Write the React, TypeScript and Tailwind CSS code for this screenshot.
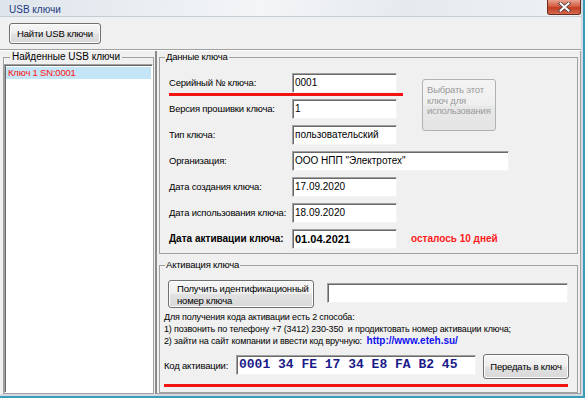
const btn =
  'rounded-[3px] border border-[#707070] bg-[linear-gradient(#f6f6f6,#eeeeee_48%,#e1e1e1_52%,#d8d8d8)] shadow-[inset_0_0_0_1px_#fcfcfc] text-black font-normal';
const field =
  'h-[20px] bg-white border border-t-[#a0a0a0] border-l-[#a0a0a0] border-b-[#f4f4f4] border-r-[#f4f4f4] shadow-[inset_1px_1px_0_#696969] pl-[2px] flex items-center text-[10px] tracking-normal';

type RowProps = {
  label: string;
  value: string;
  width?: string;
  bold?: boolean;
  children?: React.ReactNode;
};

function Row({ label, value, width = 'w-[105px]', bold, children }: RowProps) {
  return (
    <div className="flex h-[20px] items-center">
      <span className={`w-[123px] whitespace-nowrap ${bold ? 'text-[10px] font-bold tracking-normal' : ''}`}>{label}</span>
      <div className={`${field} ${width} ${bold ? 'text-[11px] font-bold' : ''}`}>{value}</div>
      {children}
    </div>
  );
}

function App() {
  return (
    <div className="h-[398px] w-[585px] overflow-hidden bg-[#3a9cb6] font-['Liberation_Sans',Arial,sans-serif] text-[9.5px] leading-[12px] tracking-[-0.2px] text-black">
      <div className="flex h-[396px] w-[583px] flex-col border-r-[2px] border-b-[2px] border-[#d3dae1] bg-[#f0f0f0]">
        {/* title bar */}
        <div className="flex h-[17px] shrink-0 items-start justify-between border-b border-[#c4ccd4] bg-[linear-gradient(100deg,#dfe5ec,#f3f5f7_45%,#e6eaee_70%,#eef1f4)]">
          <span className="pl-[9px] pt-[4px] text-[10px] tracking-normal text-[#1e3a82]">USB ключи</span>
          <div className="flex h-[15px] w-[34px] items-center justify-center rounded-b-[3px] border border-t-0 border-[#6b2c1f] bg-[linear-gradient(#e8a290,#d45e44_45%,#c43d22_55%,#d26a4f)]">
            <svg width="13" height="10" viewBox="0 0 13 10">
              <path d="M2.5 1.5 L10.5 8.5 M10.5 1.5 L2.5 8.5" stroke="#4a3a3a" strokeWidth="3.6" strokeLinecap="square" />
              <path d="M2.5 1.5 L10.5 8.5 M10.5 1.5 L2.5 8.5" stroke="#ffffff" strokeWidth="2" strokeLinecap="square" />
            </svg>
          </div>
        </div>

        {/* toolbar */}
        <div className="flex h-[32px] shrink-0 items-start pl-[9px] pt-[6px]">
          <button className={`${btn} h-[21px] w-[92px] text-[9.5px]`}>Найти USB ключи</button>
        </div>
        <div className="h-[2px] shrink-0 border-t border-b border-t-[#a0a0a0] border-b-white" />

        {/* main */}
        <div className="flex min-h-0 flex-1 pl-[3px]">
          {/* left: found keys */}
          <fieldset className="flex w-[151px] flex-col border border-[#a0a0a0] shadow-[inset_1px_0_0_#fff]">
            <legend className="ml-[6px] px-[2px] text-[10px] tracking-normal">Найденные USB ключи</legend>
            <div className="mt-[1px] flex-1 border border-t-[#a0a0a0] border-l-[#a0a0a0] border-b-white border-r-white bg-white pt-[2px] shadow-[inset_1px_1px_0_#696969]">
              <div className="ml-[1px] mr-[1px] h-[12px] bg-[#c4e5f6] pl-[2px] text-[#ff1010]">Ключ 1 SN:0001</div>
            </div>
          </fieldset>

          {/* right panel */}
          <div className="ml-[1px] flex flex-1 flex-col border-l-2 border-r border-b border-l-[#8a8a8a] border-r-[#a0a0a0] border-b-[#a0a0a0] pl-[2px] pr-[2px]">
            <fieldset className="border border-[#a0a0a0]">
              <legend className="ml-[5px] px-[1px]">Данные ключа</legend>
              <div className="flex flex-col pb-[4px] pl-[9px]">
                <div className="flex pt-[10px]">
                  <div className="flex flex-col">
                    <Row label="Серийный № ключа:" value="0001" />
                    <div className="h-[3px] w-[234px] bg-[#f21313]" />
                    <div className="mt-[3px] flex flex-col gap-[6px]">
                      <Row label="Версия прошивки ключа:" value="1" />
                      <Row label="Тип ключа:" value="пользовательский" />
                    </div>
                  </div>
                  <button className="ml-[19px] mt-[6px] flex h-[52px] w-[74px] flex-col items-start rounded-[3px] border border-[#adb2b5] bg-[linear-gradient(#f4f4f4,#efefef_50%,#e8e8e8_52%,#e4e4e4)] pl-[4px] pt-[5px] text-left leading-[10.5px] text-[#9a9a9a]">
                    <span>Выбрать этот</span>
                    <span>ключ для</span>
                    <span>использования</span>
                  </button>
                </div>
                <div className="mt-[6px] flex flex-col gap-[6px]">
                  <Row label="Организация:" value={'ООО НПП "Электротех"'} width="w-[217px]" />
                  <Row label="Дата создания ключа:" value="17.09.2020" />
                  <Row label="Дата использования ключа:" value="18.09.2020" />
                  <Row label="Дата активации ключа:" value="01.04.2021" bold>
                    <span className="ml-[14px] text-[10px] font-bold tracking-normal text-[#ff1a1a]">осталось 10 дней</span>
                  </Row>
                </div>
              </div>
            </fieldset>

            <fieldset className="mt-[5px] flex-1 border border-[#a0a0a0]">
              <legend className="ml-[5px] px-[1px]">Активация ключа</legend>
              <div className="flex flex-col pb-[2px] pl-[4px]">
                <div className="flex items-start pt-[9px] pl-[4px]">
                  <button className={`${btn} flex h-[28px] w-[146px] flex-col items-start pl-[8px] pt-[2px] text-left whitespace-nowrap`}>
                    <span>Получить идентификационный</span>
                    <span>номер ключа</span>
                  </button>
                  <div className={`${field} ml-[13px] mt-[3px] w-[241px]`} />
                </div>
                <div className="mt-[3px] flex flex-col text-[9px] tracking-[-0.15px] whitespace-nowrap">
                  <span>Для получения кода активации есть 2 способа:</span>
                  <span>1) позвонить по телефону +7 (3412) 230-350&nbsp; и продиктовать номер активации ключа;</span>
                  <span>
                    2) зайти на сайт компании и ввести код вручную:&nbsp;{' '}
                    <span className="text-[10px] font-bold tracking-normal text-[#1010f0]">http://www.eteh.su/</span>
                  </span>
                </div>
                <div className="mt-[7px] flex items-start">
                  <span className="mt-[6px] w-[72px] whitespace-nowrap">Код активации:</span>
                  <div className={`${field} mt-[1px] h-[20px] w-[240px] font-['Liberation_Mono',monospace] text-[13px] font-bold tracking-[0.3px] text-[#1a1a8a]`}>
                    0001 34 FE 17 34 E8 FA B2 45
                  </div>
                  <button className={`${btn} ml-[7px] h-[25px] w-[86px] whitespace-nowrap`}>Передать в ключ</button>
                </div>
                <div className="mt-[5px] h-[3px] w-[404px] bg-[#f21313]" />
              </div>
            </fieldset>
          </div>
        </div>
      </div>
    </div>
  );
}

export default App;
